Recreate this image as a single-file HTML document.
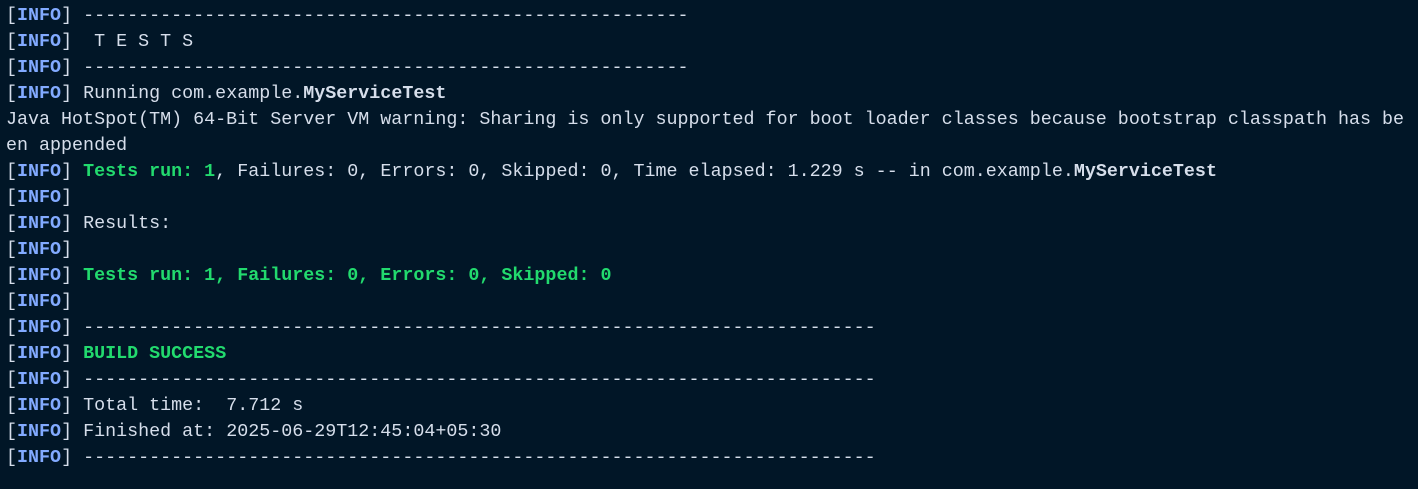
<!DOCTYPE html>
<html><head><meta charset="utf-8"><style>
html,body{margin:0;padding:0;background:#011627;width:1418px;height:489px;overflow:hidden}
pre{margin:0;padding:3px 0 0 6px;font-family:"Liberation Mono",monospace;font-size:18.35px;line-height:26px;color:#d6deeb;white-space:pre}
.i{color:#82aaff;font-weight:bold}
.b{color:#d6deeb}
.g{color:#22da6e;font-weight:bold}
.w{font-weight:bold}
</style></head><body><pre><span class="b">[</span><span class="i">INFO</span><span class="b">]</span> -------------------------------------------------------
<span class="b">[</span><span class="i">INFO</span><span class="b">]</span>  T E S T S
<span class="b">[</span><span class="i">INFO</span><span class="b">]</span> -------------------------------------------------------
<span class="b">[</span><span class="i">INFO</span><span class="b">]</span> Running com.example.<span class="w">MyServiceTest</span>
Java HotSpot(TM) 64-Bit Server VM warning: Sharing is only supported for boot loader classes because bootstrap classpath has be
en appended
<span class="b">[</span><span class="i">INFO</span><span class="b">]</span> <span class="g">Tests run: 1</span>, Failures: 0, Errors: 0, Skipped: 0, Time elapsed: 1.229 s -- in com.example.<span class="w">MyServiceTest</span>
<span class="b">[</span><span class="i">INFO</span><span class="b">]</span>
<span class="b">[</span><span class="i">INFO</span><span class="b">]</span> Results:
<span class="b">[</span><span class="i">INFO</span><span class="b">]</span>
<span class="b">[</span><span class="i">INFO</span><span class="b">]</span> <span class="g">Tests run: 1, Failures: 0, Errors: 0, Skipped: 0</span>
<span class="b">[</span><span class="i">INFO</span><span class="b">]</span>
<span class="b">[</span><span class="i">INFO</span><span class="b">]</span> ------------------------------------------------------------------------
<span class="b">[</span><span class="i">INFO</span><span class="b">]</span> <span class="g">BUILD SUCCESS</span>
<span class="b">[</span><span class="i">INFO</span><span class="b">]</span> ------------------------------------------------------------------------
<span class="b">[</span><span class="i">INFO</span><span class="b">]</span> Total time:  7.712 s
<span class="b">[</span><span class="i">INFO</span><span class="b">]</span> Finished at: 2025-06-29T12:45:04+05:30
<span class="b">[</span><span class="i">INFO</span><span class="b">]</span> ------------------------------------------------------------------------
</pre></body></html>
